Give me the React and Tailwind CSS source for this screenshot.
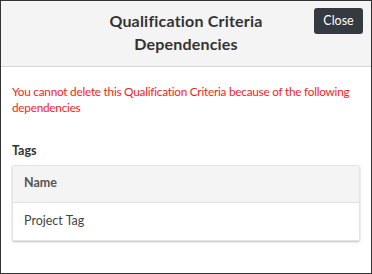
export default function App() {
  return (
    <div className="w-[372px] h-[274px] border border-[#333] bg-white font-['Lato',sans-serif] overflow-hidden">
      <div className="h-[66px] bg-[#f4f4f4] border-b border-[#d4d4d4] grid grid-cols-[62px_1fr_62px] items-start">
        <div />
        <h2 className="pt-[8px] text-center text-[16px] leading-[23px] font-bold text-[#333] tracking-[0.2px]">
          Qualification Criteria Dependencies
        </h2>
        <div className="flex justify-end pt-[7px] pr-[8px]">
          <button className="h-[26px] w-[49px] rounded-[3px] bg-[#343a40] text-white text-[12.5px] leading-none">
            Close
          </button>
        </div>
      </div>
      <div className="px-[11px]">
        <p className="mt-[17px] text-[11.8px] leading-[16px] tracking-[-0.25px] text-[#ff1a1a]">
          You cannot delete this Qualification Criteria because of the following dependencies
        </p>
        <div className="mt-[26px] text-[12.5px] font-bold text-[#333]">Tags</div>
        <div className="mt-[4px] border border-[#e4e4e4] rounded-[2px] shadow-[0_1px_2px_rgba(0,0,0,0.25)]">
          <div className="h-[37px] bg-[#f4f4f4] border-b border-[#e2e2e2] flex items-center px-[11px] text-[12.5px] font-bold text-[#555]">
            Name
          </div>
          <div className="h-[37px] bg-white flex items-center px-[11px] text-[12.5px] text-[#444]">
            Project Tag
          </div>
        </div>
      </div>
    </div>
  );
}
